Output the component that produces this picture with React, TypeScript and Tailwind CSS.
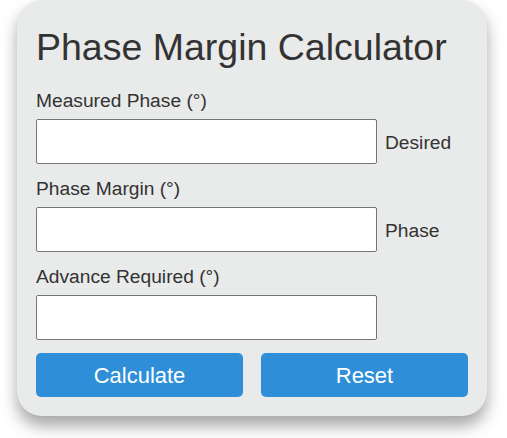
import React from "react"

const fields = [
  { label: "Measured Phase (°)", side: "Desired" },
  { label: "Phase Margin (°)", side: "Phase" },
  { label: "Advance Required (°)", side: "" },
]

export default function App() {
  return (
    <div className="min-h-[438px] bg-white font-['Liberation_Sans',Arial,sans-serif] text-[#333]">
      <div className="ml-[17px] w-[470px] rounded-[25px] bg-[#e9eaea] px-[19px] pb-[19px] pt-[25px] shadow-[0_10px_16px_rgba(0,0,0,0.35)]">
        <h1 className="text-[37.5px] leading-[44px] text-[#333]">Phase Margin Calculator</h1>

        <div className="mt-[21px]">
          {fields.map((field, i) => (
            <div key={i} className={i > 0 ? "mt-[14px]" : ""}>
              <label className="block text-[19.2px] leading-[22px]">{field.label}</label>
              <div className="mt-[7px] flex items-start">
                <input
                  type="text"
                  className="h-[45px] w-[341px] rounded-[2px] border border-[#767676] bg-white px-2 text-[18px] outline-none"
                />
                {field.side && (
                  <span className="ml-[8px] mt-[13px] text-[19.2px] leading-[22px]">{field.side}</span>
                )}
              </div>
            </div>
          ))}
        </div>

        <div className="mt-[13px] grid grid-cols-2 gap-[18px]">
          <button className="h-[44px] rounded-[5px] bg-[#2e8fd8] text-[22px] text-white">Calculate</button>
          <button className="h-[44px] rounded-[5px] bg-[#2e8fd8] text-[22px] text-white">Reset</button>
        </div>
      </div>
    </div>
  )
}
